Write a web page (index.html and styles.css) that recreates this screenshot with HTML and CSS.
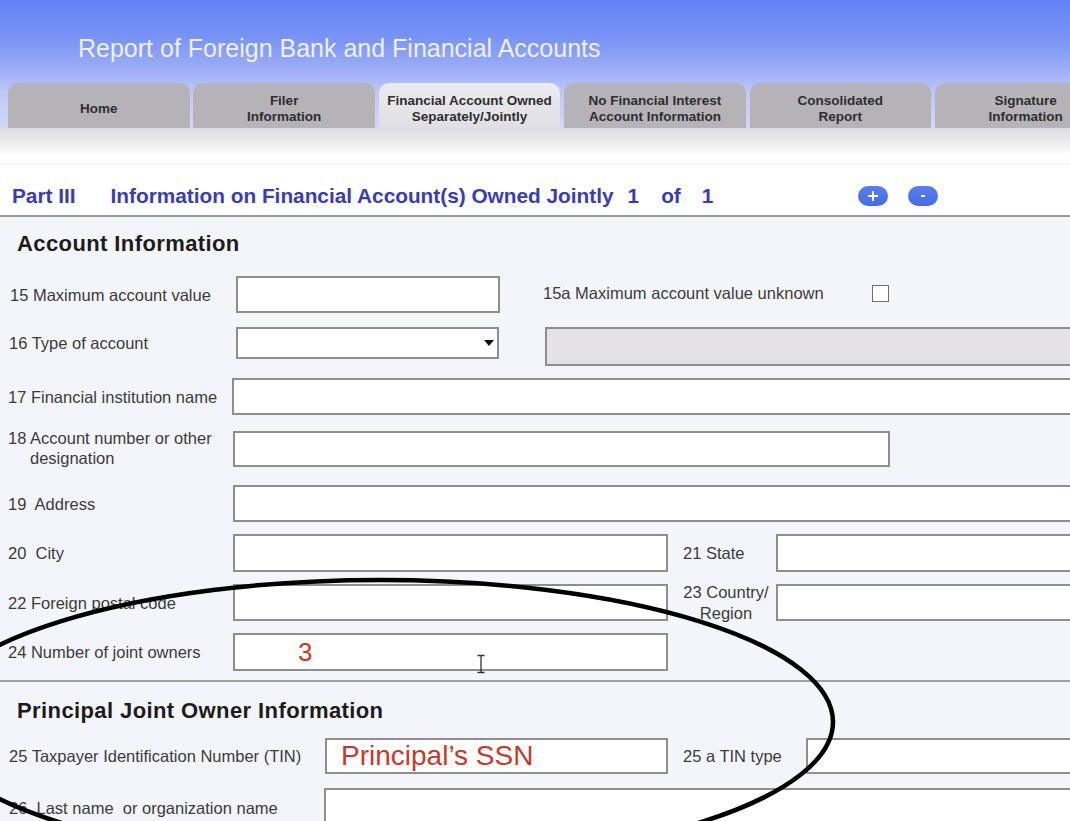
FILE: index.html
```html
<!DOCTYPE html>
<html lang="en">
<head>
<meta charset="utf-8">
<title>Report of Foreign Bank and Financial Accounts</title>
<link rel="stylesheet" href="styles.css">
</head>
<body>
<div class="page">
  <header class="header">
    <h1 class="title">Report of Foreign Bank and Financial Accounts</h1>
    <nav class="tabs">
      <div class="tab">Home</div>
      <div class="tab">Filer<br>Information</div>
      <div class="tab active">Financial Account Owned<br>Separately/Jointly</div>
      <div class="tab">No Financial Interest<br>Account Information</div>
      <div class="tab">Consolidated<br>Report</div>
      <div class="tab">Signature<br>Information</div>
    </nav>
  </header>
  <div class="band"></div>
  <div class="partbar">
    <span class="part">Part III</span>
    <span class="part-title">Information on Financial Account(s) Owned Jointly</span>
    <span class="n1">1</span>
    <span class="of">of</span>
    <span class="n2">1</span>
    <span class="pill plus"><svg width="30" height="20" viewBox="0 0 30 20"><path d="M15 5v10M10 10h10" stroke="#fff" stroke-width="1.8"/></svg></span>
    <span class="pill minus"><svg width="30" height="20" viewBox="0 0 30 20"><path d="M13 10h4" stroke="#fff" stroke-width="2"/></svg></span>
  </div>
  <main class="form">
    <h2 class="section">Account Information</h2>

    <div class="row r15">
      <label class="lbl l15">15 Maximum account value</label>
      <input class="box w15" type="text">
      <span class="side s15a">15a Maximum account value unknown</span>
      <span class="check"></span>
    </div>

    <div class="row r16">
      <label class="lbl l16">16 Type of account</label>
      <div class="box select"><span class="arrow"></span></div>
      <div class="box disabled"></div>
    </div>

    <div class="row r17">
      <label class="lbl l17">17 Financial institution name</label>
      <input class="box grow" type="text">
    </div>

    <div class="row r18">
      <label class="lbl l18">18 Account number or other<br>designation</label>
      <input class="box w18" type="text">
    </div>

    <div class="row r19">
      <label class="lbl lstd">19&nbsp; Address</label>
      <input class="box grow" type="text">
    </div>

    <div class="row r20">
      <label class="lbl lstd">20&nbsp; City</label>
      <input class="box wmid" type="text">
      <span class="side s21">21 State</span>
      <input class="box grow" type="text">
    </div>

    <div class="row r22">
      <label class="lbl lstd">22 Foreign postal code</label>
      <input class="box wmid" type="text">
      <span class="side s23">23 Country/<br>Region</span>
      <input class="box grow" type="text">
    </div>

    <div class="row r24">
      <label class="lbl lstd">24 Number of joint owners</label>
      <input class="box wmid val3" type="text" value="3">
    </div>

    <div class="divider"></div>

    <h2 class="section s2">Principal Joint Owner Information</h2>

    <div class="row r25">
      <label class="lbl lwide">25 Taxpayer Identification Number (TIN)</label>
      <input class="box w25 ssn" type="text" value="Principal’s SSN">
      <span class="side s25a">25 a TIN type</span>
      <input class="box grow" type="text">
    </div>

    <div class="row r26">
      <label class="lbl lwide l26">26&nbsp; Last name&nbsp; or organization name</label>
      <input class="box grow" type="text">
    </div>
  </main>

  <svg class="overlay" width="1070" height="821" viewBox="0 0 1070 821">
    <ellipse cx="380" cy="722" rx="453" ry="142" fill="none" stroke="#000" stroke-width="4.5"/>
    <path d="M477.5 655.5h7M481 655.5v17M477.5 672.5h7" stroke="#333" stroke-width="1.3" fill="none"/>
  </svg>
</div>
</body>
</html>
```

FILE: styles.css
```css
html, body {
  margin: 0;
  padding: 0;
  overflow: hidden;
  background: #ffffff;
}

body {
  font-family: "Liberation Sans", Arial, sans-serif;
}

.page {
  position: relative;
  width: 1090px;
  height: 821px;
  overflow: hidden;
}

/* ---------- header ---------- */
.header {
  height: 128px;
  background: linear-gradient(to bottom, #6282f5 0%, #7a94f6 30%, #9eaef6 55%, #bec7f6 72%, #d4d8f5 100%);
}

.title {
  margin: 0;
  height: 83px;
  box-sizing: border-box;
  padding: 33px 0 0 78px;
  font-size: 25px;
  line-height: 30px;
  font-weight: normal;
  color: #eef1fd;
}

.tabs {
  display: flex;
  gap: 3.9px;
  padding-left: 8px;
  height: 45px;
}

.tab {
  flex: none;
  box-sizing: border-box;
  width: 181.5px;
  height: 45px;
  padding-top: 7px;
  border-radius: 10px 10px 0 0;
  background: #b5b3b8;
  display: flex;
  align-items: center;
  justify-content: center;
  text-align: center;
  font-weight: bold;
  font-size: 13.5px;
  line-height: 16px;
  color: #2e2e2e;
}

.tab.active {
  background: linear-gradient(to bottom, #ecebef, #e0dfe3);
}

.band {
  height: 37px;
  background: linear-gradient(to bottom, #dbdadf 0%, #ececef 40%, #ffffff 72%, #ffffff 88%, #f4f4f8 100%);
}

/* ---------- part bar ---------- */
.partbar {
  display: flex;
  align-items: center;
  height: 38px;
  padding-top: 12px;
  border-bottom: 2px solid #9a9a9a;
  background: #ffffff;
  color: #3a3cb5;
  font-weight: bold;
  font-size: 20.8px;
}

.part { margin-left: 12px; }
.part-title { margin-left: 35px; }
.n1 { margin-left: 14px; }
.of { margin-left: 22px; }
.n2 { margin-left: 21px; }

.pill {
  flex: none;
  width: 30px;
  height: 20px;
  border-radius: 10px;
  background: linear-gradient(to bottom, #5a7ef0, #466be4);
  display: flex;
}

.plus { margin-left: 145px; }
.minus { margin-left: 20px; }

/* ---------- form ---------- */
.form {
  display: flex;
  flex-direction: column;
  background: #f4f5fb;
  min-height: 604px;
}

.form > * {
  flex-shrink: 0;
}

.section {
  margin: 14px 0 0 17px;
  font-size: 22px;
  line-height: 26px;
  font-weight: bold;
  letter-spacing: 0.4px;
  color: #1c1c1c;
}

.section.s2 { margin-top: 16px; }

.row {
  display: flex;
  align-items: center;
  padding-left: 8px;
}

.r15 { margin-top: 19px; height: 37px; }
.r16 { margin-top: 14px; height: 39px; align-items: flex-start; }
.r17 { margin-top: 12px; height: 37px; }
.r18 { margin-top: 16px; height: 36px; align-items: flex-start; }
.r19 { margin-top: 18px; height: 37px; }
.r20 { margin-top: 12px; height: 38px; }
.r22 { margin-top: 12px; height: 37px; }
.r24 { margin-top: 12px; height: 38px; }
.r25 { margin-top: 14px; height: 36px; }
.r26 { margin-top: 14px; height: 40px; }

.lbl {
  flex: none;
  box-sizing: border-box;
  font-size: 16.5px;
  line-height: 20px;
  color: #3b3b3b;
  white-space: nowrap;
}

.l15 { width: 228px; padding-left: 2px; }
.l16 { width: 228px; padding-left: 1px; line-height: 32px; }
.l17 { width: 224px; }
.l18 { width: 225px; margin-top: -3px; padding-left: 22px; text-indent: -22px; }
.lstd { width: 225px; }
.lwide { width: 317px; padding-left: 1px; }
.l26 { width: 316px; }

.box {
  flex: none;
  box-sizing: border-box;
  height: 100%;
  margin: 0;
  padding: 0;
  border: 2px solid #8e8e8e;
  border-radius: 0;
  background: #ffffff;
  font-family: "Liberation Sans", Arial, sans-serif;
  outline: none;
}

.grow { flex: 1 1 0; min-width: 0; }

.w15 { width: 264px; }
.w18 { width: 657px; }
.wmid { width: 435px; }
.w25 { width: 343px; }

.select {
  width: 263px;
  height: 32px;
  display: flex;
  align-items: center;
  justify-content: flex-end;
  padding-right: 3px;
}

.arrow {
  width: 0;
  height: 0;
  border-left: 5.5px solid transparent;
  border-right: 5.5px solid transparent;
  border-top: 6px solid #111111;
}

.disabled {
  flex: 1 1 0;
  height: 39px;
  margin-left: 46px;
  background: #e4e2e6;
}

.side {
  flex: none;
  box-sizing: border-box;
  font-size: 16.5px;
  line-height: 20px;
  color: #3b3b3b;
  white-space: nowrap;
}

.s15a { margin-left: 43px; width: 329px; margin-top: -3px; }
.s21 { margin-left: 15px; width: 93px; }
.s23 { margin-left: 15px; width: 86px; margin-right: 7px; text-align: center; line-height: 21px; }
.s25a { margin-left: 15px; width: 123px; }

.check {
  flex: none;
  box-sizing: border-box;
  width: 17px;
  height: 17px;
  margin-top: -2px;
  border: 1.5px solid #6e6e6e;
  background: #ffffff;
}

.val3 {
  padding-left: 63px;
  font-size: 26px;
  color: #c53a2b;
}

.ssn {
  padding-left: 14px;
  font-size: 28px;
  color: #c53a2b;
}

.divider {
  margin-top: 9px;
  height: 0;
  border-top: 2px solid #a0a0a0;
}

/* ---------- annotation overlay ---------- */
.overlay {
  position: absolute;
  left: 0;
  top: 0;
  pointer-events: none;
}
```
